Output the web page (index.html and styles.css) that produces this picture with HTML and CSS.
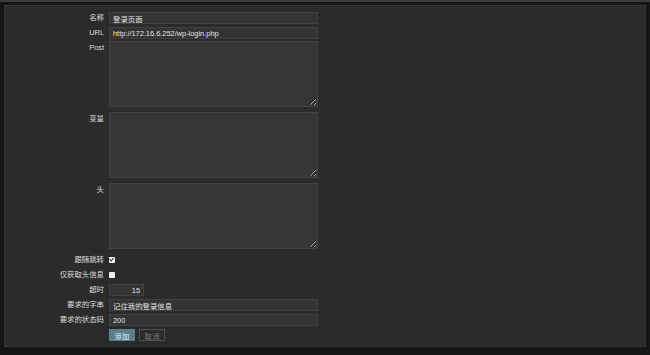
FILE: index.html
```html
<!DOCTYPE html>
<html lang="zh">
<head>
    <meta charset="UTF-8">
    <title>Web 场景步骤</title>
    <link rel="stylesheet" href="styles.css">
</head>
<body>
    <div class="topline"></div>
    <div class="panel">
        <form class="step-form">
            <label class="lbl">名称</label>
            <input class="field" type="text" value="登录页面">

            <label class="lbl">URL</label>
            <input class="field" type="text" value="http://172.16.6.252/wp-login.php">

            <label class="lbl top">Post</label>
            <textarea class="area"></textarea>

            <label class="lbl top">变量</label>
            <textarea class="area"></textarea>

            <label class="lbl top">头</label>
            <textarea class="area last"></textarea>

            <label class="lbl">跟随跳转</label>
            <div class="cell"><input class="check" type="checkbox" checked></div>

            <label class="lbl">仅获取头信息</label>
            <div class="cell"><input class="check" type="checkbox"></div>

            <label class="lbl">超时</label>
            <div class="cell"><input class="field short" type="text" value="15"></div>

            <label class="lbl">要求的字串</label>
            <input class="field" type="text" value="记住我的登录信息">

            <label class="lbl">要求的状态码</label>
            <input class="field" type="text" value="200">

            <span></span>
            <div class="buttons">
                <button type="button" class="btn primary">添加</button>
                <button type="button" class="btn ghost">取消</button>
            </div>
        </form>
    </div>
</body>
</html>
```

FILE: styles.css
```css
* {
    margin: 0;
    padding: 0;
    box-sizing: border-box;
    font-family: "Liberation Sans", "Noto Sans CJK SC", sans-serif;
}

body {
    background: #151617;
    height: 355px;
    overflow: hidden;
}

.topline {
    height: 2px;
    background: #3a3a3a;
}

.panel {
    margin: 3px 4px 0 4px;
    height: 342px;
    background: #2b2b2b;
    border: 1px solid #343434;
    padding: 6px 0 0 0;
}

.step-form {
    display: grid;
    grid-template-columns: 99px 209px;
    column-gap: 5px;
    row-gap: 3px;
    align-items: center;
    font-size: 7.4px;
    color: #dcdcdc;
}

.lbl {
    text-align: right;
    line-height: 12px;
    white-space: nowrap;
}

.lbl.top {
    align-self: start;
}

.field {
    height: 12px;
    width: 209px;
    background: #343434;
    border: 1px solid #414141;
    color: #e2e2e2;
    font-size: 7.4px;
    padding: 0 3px;
    outline: none;
}

.field.short {
    width: 35px;
    text-align: right;
}

.area {
    width: 209px;
    height: 66px;
    background: #363636;
    border: 1px solid #434343;
    margin: -1px 0 3px 0;
    resize: vertical;
    display: block;
}

.area.last {
    margin-bottom: 2px;
}

.cell {
    height: 12px;
    display: flex;
    align-items: center;
}

.check {
    appearance: none;
    width: 6px;
    height: 6px;
    background: #f2f2f2;
    border: none;
    border-radius: 1px;
    position: relative;
}

.check:checked::after {
    content: "";
    position: absolute;
    left: 1px;
    top: 0px;
    width: 2px;
    height: 3px;
    border-right: 1px solid #333;
    border-bottom: 1px solid #333;
    transform: rotate(40deg);
}

.buttons {
    display: flex;
    gap: 4px;
}

.btn {
    height: 12px;
    width: 26px;
    font-size: 7.4px;
    border: 1px solid #5b7e8e;
    cursor: pointer;
}

.btn.primary {
    background: #5b7e8e;
    color: #e8eef0;
}

.btn.ghost {
    background: #2b2b2b;
    border-color: #4c4c4c;
    color: #787878;
}
```
